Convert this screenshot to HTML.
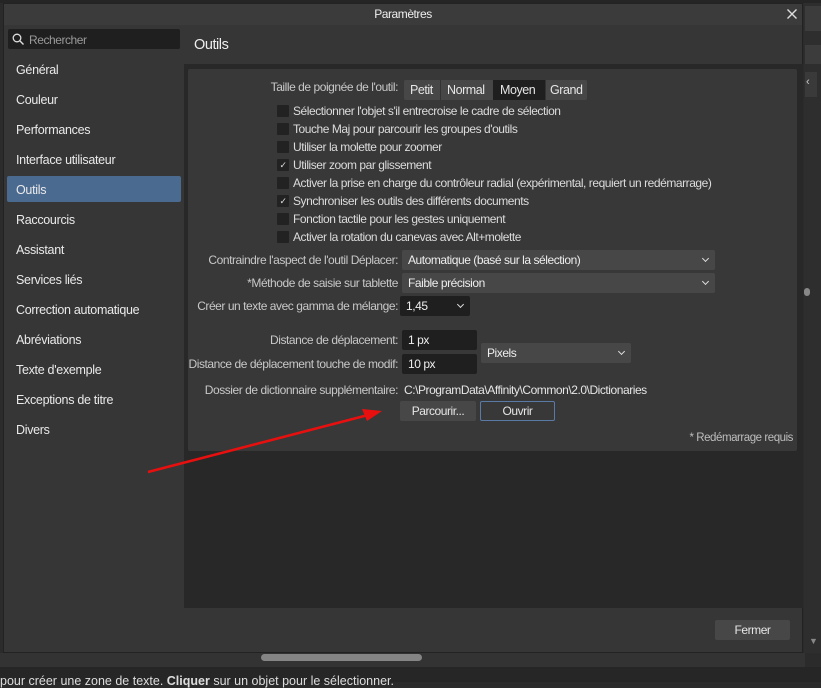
<!DOCTYPE html>
<html><head><meta charset="utf-8"><style>
*{margin:0;padding:0;box-sizing:border-box}
body{width:821px;height:682px;background:#2b2b2b;font-family:"Liberation Sans",sans-serif;font-size:12px;color:#e6e6e6;position:relative;overflow:hidden;letter-spacing:-0.45px}
.a{position:absolute;white-space:nowrap}
.lbl{position:absolute;color:#c8c8c8;text-align:right;white-space:nowrap}
.cb{position:absolute;left:277px;width:12px;height:12px;background:#222;border-radius:1px}
.ct{position:absolute;left:293px;color:#dcdcdc;white-space:nowrap}
.dd{position:absolute;background:#474747;border-radius:2px;padding:3px 6px;color:#eee}
.inp{position:absolute;background:#1f1f1f;border-radius:2px;padding:3px 6px;color:#eee}
.chev{position:absolute;right:7px;top:6px;width:5px;height:5px;border-right:1.2px solid #ddd;border-bottom:1.2px solid #ddd;transform:rotate(45deg)}
.nav{position:absolute;left:16px;font-size:12.5px;color:#eaeaea;letter-spacing:-0.3px}
</style></head><body>
<div class="a" style="left:0;top:0;width:821px;height:3px;background:#252525"></div>
<div class="a" style="left:804px;top:3px;width:17px;height:650px;background:#2e2e2e"></div>
<div class="a" style="left:805px;top:6px;width:16px;height:25px;background:#3c3c3c"></div>
<div class="a" style="left:805px;top:45px;width:16px;height:19px;background:#3c3c3c"></div>
<div class="a" style="left:805px;top:72px;width:12px;height:25px;background:#3a3a3a;color:#ccc;font-size:11px;padding:4px 1px">&lsaquo;</div>
<div class="a" style="left:804px;top:288px;width:6px;height:8px;background:#888;border-radius:3px"></div>
<!-- dialog -->
<div class="a" style="left:3px;top:3px;width:800px;height:650px;background:#363636;border:1px solid #222"></div>
<div class="a" style="left:4px;top:4px;width:798px;height:21px;background:#3b3b3b;text-align:center;line-height:21px;color:#eee">Paramètres</div>
<svg class="a" style="left:787px;top:9px" width="10" height="10"><path d="M0.5 0.5L9.5 9.5M9.5 0.5L0.5 9.5" stroke="#ddd" stroke-width="1.4"/></svg>
<!-- search -->
<div class="a" style="left:8px;top:29px;width:172px;height:20px;background:#1f1f1f;border-radius:2px"></div>
<svg class="a" style="left:12px;top:33px" width="13" height="13" viewBox="0 0 13 13"><circle cx="5" cy="5" r="3.8" fill="none" stroke="#ddd" stroke-width="1.3"/><path d="M7.8 7.8L11.5 11.5" stroke="#ddd" stroke-width="1.4"/></svg>
<div class="a" style="left:29px;top:33px;color:#9a9a9a">Rechercher</div>
<div class="a" style="left:194px;top:37px;font-size:14.5px;color:#eee">Outils</div>
<!-- nav -->
<div class="a" style="left:7px;top:176px;width:174px;height:26px;background:#4a6a90;border-radius:2px"></div>
<div class="nav" style="top:63px">Général</div>
<div class="nav" style="top:93px">Couleur</div>
<div class="nav" style="top:123px">Performances</div>
<div class="nav" style="top:153px">Interface utilisateur</div>
<div class="nav" style="top:183px">Outils</div>
<div class="nav" style="top:213px">Raccourcis</div>
<div class="nav" style="top:243px">Assistant</div>
<div class="nav" style="top:273px">Services liés</div>
<div class="nav" style="top:303px">Correction automatique</div>
<div class="nav" style="top:333px">Abréviations</div>
<div class="nav" style="top:363px">Texte d'exemple</div>
<div class="nav" style="top:393px">Exceptions de titre</div>
<div class="nav" style="top:423px">Divers</div>
<!-- content -->
<div class="a" style="left:184px;top:64px;width:619px;height:544px;background:#282828"></div>
<div class="a" style="left:188px;top:69px;width:609px;height:382px;background:#383838;border-radius:2px"></div>
<div class="lbl" style="right:423px;top:80px">Taille de poignée de l'outil:</div>
<div class="a" style="left:404px;top:80px;width:183px;height:20px;background:#474747;border-radius:2px"></div>
<div class="a" style="left:493px;top:80px;width:52px;height:20px;background:#1f1f1f"></div>
<div class="a" style="left:440px;top:80px;width:1px;height:20px;background:#333"></div>
<div class="a" style="left:545px;top:80px;width:1px;height:20px;background:#333"></div>
<div class="a" style="left:410px;top:83px;font-size:12.5px">Petit</div>
<div class="a" style="left:447px;top:83px;font-size:12.5px">Normal</div>
<div class="a" style="left:500px;top:83px;font-size:12.5px">Moyen</div>
<div class="a" style="left:550px;top:83px;font-size:12.5px">Grand</div>
<div class="cb" style="top:105px"></div><div class="ct" style="top:104px">Sélectionner l'objet s'il entrecroise le cadre de sélection</div>
<div class="cb" style="top:123px"></div><div class="ct" style="top:122px">Touche Maj pour parcourir les groupes d'outils</div>
<div class="cb" style="top:141px"></div><div class="ct" style="top:140px">Utiliser la molette pour zoomer</div>
<div class="cb" style="top:159px;font-size:9px;color:#ddd;text-align:center;line-height:12px">✓</div><div class="ct" style="top:158px">Utiliser zoom par glissement</div>
<div class="cb" style="top:177px"></div><div class="ct" style="top:176px">Activer la prise en charge du contrôleur radial (expérimental, requiert un redémarrage)</div>
<div class="cb" style="top:195px;font-size:9px;color:#ddd;text-align:center;line-height:12px">✓</div><div class="ct" style="top:194px">Synchroniser les outils des différents documents</div>
<div class="cb" style="top:213px"></div><div class="ct" style="top:212px">Fonction tactile pour les gestes uniquement</div>
<div class="cb" style="top:231px"></div><div class="ct" style="top:230px">Activer la rotation du canevas avec Alt+molette</div>
<div class="lbl" style="right:423px;top:253px">Contraindre l'aspect de l'outil Déplacer:</div>
<div class="dd" style="left:402px;top:250px;width:313px;height:20px">Automatique (basé sur la sélection)<span class="chev"></span></div>
<div class="lbl" style="right:423px;top:276px">*Méthode de saisie sur tablette</div>
<div class="dd" style="left:402px;top:273px;width:313px;height:20px">Faible précision<span class="chev"></span></div>
<div class="lbl" style="right:423px;top:299px">Créer un texte avec gamma de mélange:</div>
<div class="inp" style="left:400px;top:296px;width:70px;height:20px">1,45<span class="chev"></span></div>
<div class="lbl" style="right:423px;top:333px">Distance de déplacement:</div>
<div class="inp" style="left:402px;top:330px;width:75px;height:20px">1 px</div>
<div class="lbl" style="right:423px;top:357px">Distance de déplacement touche de modif:</div>
<div class="inp" style="left:402px;top:354px;width:75px;height:20px">10 px</div>
<div class="dd" style="left:481px;top:343px;width:150px;height:20px">Pixels<span class="chev"></span></div>
<div class="lbl" style="right:423px;top:383px">Dossier de dictionnaire supplémentaire:</div>
<div class="a" style="left:404px;top:383px">C:\ProgramData\Affinity\Common\2.0\Dictionaries</div>
<div class="a" style="left:400px;top:401px;width:76px;height:20px;background:#474747;border-radius:2px;text-align:center;line-height:20px">Parcourir...</div>
<div class="a" style="left:480px;top:401px;width:75px;height:20px;background:#383838;border:1px solid #5a7aa6;border-radius:2px;text-align:center;line-height:18px">Ouvrir</div>
<div class="a" style="right:28px;top:432px;color:#bdbdbd;font-size:11.5px">* Redémarrage requis</div>
<!-- arrow -->
<svg class="a" style="left:0;top:0" width="821" height="682"><path d="M148 472L372 414" stroke="#e8100f" stroke-width="2.5"/><path d="M382 411L362 409L367 421Z" fill="#e8100f"/></svg>
<!-- footer -->
<div class="a" style="left:715px;top:620px;width:75px;height:20px;background:#474747;border-radius:2px;text-align:center;line-height:20px">Fermer</div>
<div class="a" style="left:0;top:653px;width:805px;height:14px;background:#333"></div>
<div class="a" style="left:261px;top:654px;width:161px;height:7px;background:#858585;border-radius:4px"></div>
<div class="a" style="left:809px;top:636px;color:#888;font-size:9px">▼</div>
<div class="a" style="left:0;top:667px;width:821px;height:15px;background:#262626"></div>
<div class="a" style="left:0;top:674px;color:#ddd;font-size:12.5px;letter-spacing:0">pour créer une zone de texte. <b>Cliquer</b> sur un objet pour le sélectionner.</div>
</body></html>
